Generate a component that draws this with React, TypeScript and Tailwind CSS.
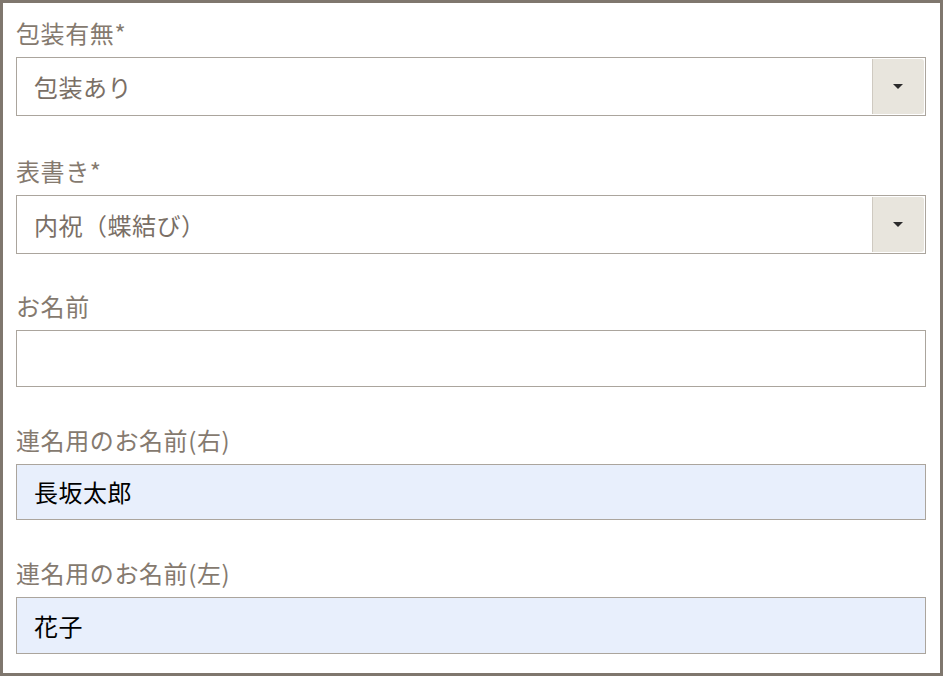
const font = { fontFamily: '"Noto Sans CJK JP", "Noto Sans", sans-serif' };

interface FieldProps {
  label: string;
  className?: string;
  children: React.ReactNode;
}

const Field = ({ label, className, children }: FieldProps) => (
  <div className={className}>
    <div className="text-[24px] leading-[28px] tracking-[0.6px] text-[#857a6f] mb-[10px]">{label}</div>
    {children}
  </div>
);

const Select = ({ value }: { value: string }) => (
  <div className="flex h-[59px] border border-[#aba59d] bg-white">
    <div className="flex-1 flex items-center pl-[17px] text-[24px] tracking-[0.5px] text-[#7a6f66]">{value}</div>
    <div className="w-[52px] my-[1px] mr-[1px] bg-[#e8e5dd] border-l border-[#cfcac1] rounded-r-[3px] flex items-center justify-center">
      <span className="block w-0 h-0 border-l-[5px] border-r-[5px] border-t-[5px] border-l-transparent border-r-transparent border-t-[#2b2b2b] translate-x-[-1px]" />
    </div>
  </div>
);

const Input = ({ value, filled, h = "h-[57px]" }: { value?: string; filled?: boolean; h?: string }) => (
  <div
    className={`flex items-center ${h} border border-[#aba59d] pl-[17px] text-[24px] tracking-[0.5px] text-black ${
      filled ? "bg-[#e8effc]" : "bg-white"
    }`}
  >
    {value}
  </div>
);

export default function App() {
  return (
    <div
      className="w-[943px] h-[676px] border-[3px] border-[#7f776e] bg-white pt-[16px] pl-[13px] pr-[14px]"
      style={font}
    >
      <Field label="包装有無*">
        <Select value="包装あり" />
      </Field>
      <Field label="表書き*" className="mt-[41px]">
        <Select value="内祝（蝶結び）" />
      </Field>
      <Field label="お名前" className="mt-[38px]">
        <Input />
      </Field>
      <Field label="連名用のお名前(右)" className="mt-[39px]">
        <Input value="長坂太郎" filled h="h-[56px]" />
      </Field>
      <Field label="連名用のお名前(左)" className="mt-[39px]">
        <Input value="花子" filled />
      </Field>
    </div>
  );
}
